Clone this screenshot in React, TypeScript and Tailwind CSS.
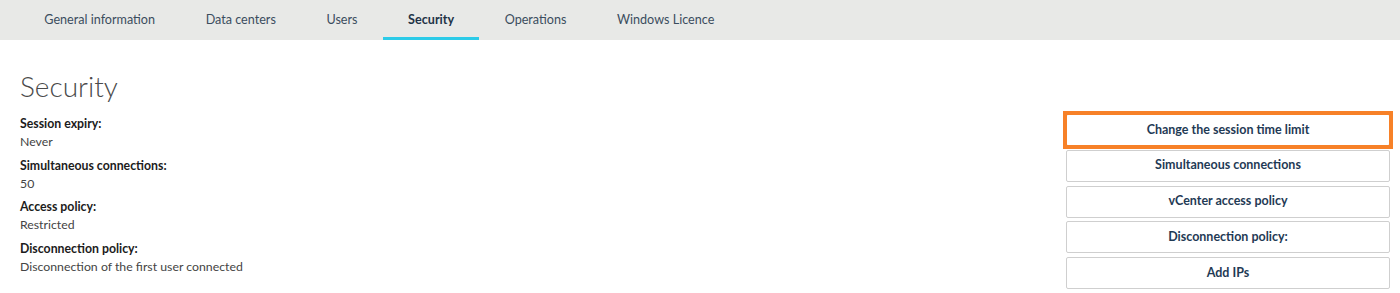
import React from "react";

const tabs = ["General information", "Data centers", "Users", "Security", "Operations", "Windows Licence"];

const items = [
  ["Session expiry:", "Never"],
  ["Simultaneous connections:", "50"],
  ["Access policy:", "Restricted"],
  ["Disconnection policy:", "Disconnection of the first user connected"],
];

const buttons = [
  "Change the session time limit",
  "Simultaneous connections",
  "vCenter access policy",
  "Disconnection policy:",
  "Add IPs",
];

export default function App() {
  return (
    <div className="w-[1400px] h-[293px] bg-white overflow-hidden" style={{ fontFamily: "Lato, 'Noto Sans', sans-serif" }}>
      <div className="h-[40px] bg-[#e8e9e7] flex pl-[19px]">
        {tabs.map((t) => (
          <div
            key={t}
            className={`px-[25.3px] h-full flex items-center text-[12.6px] border-b-[3px] pt-[4px] ${
              t === "Security" ? "border-[#2ccbe8] font-bold text-[#1f3447]" : "border-transparent text-[#3b4d5e]"
            }`}
          >
            {t}
          </div>
        ))}
      </div>
      <div className="flex justify-between pl-[20px] pr-[10px]">
        <div className="pt-[28px]">
          <h1 className="text-[28px] font-light text-[#4a4a4a] leading-[36px] mb-[11px]">Security</h1>
          <div className="flex flex-col gap-[5.5px]">
            {items.map(([l, v]) => (
              <div key={l} className="flex flex-col">
                <div className="text-[12.3px] font-bold text-[#1c1c1c] leading-[18px]">{l}</div>
                <div className="text-[12.3px] text-[#444] leading-[18px]">{v}</div>
              </div>
            ))}
          </div>
        </div>
        <div className="pt-[74px] w-[324px] flex flex-col gap-[3.75px]">
          {buttons.map((b, i) => (
            <div key={b} className="relative">
              <div className="h-[32px] border border-[#cfcfcf] rounded-[2px] bg-white flex items-center justify-center text-[12.5px] font-bold text-[#1f3a55]">
                {b}
              </div>
              {i === 0 && (
                <div className="absolute -inset-[3px] border-[4px] border-[#f78128] pointer-events-none" />
              )}
            </div>
          ))}
        </div>
      </div>
    </div>
  );
}
